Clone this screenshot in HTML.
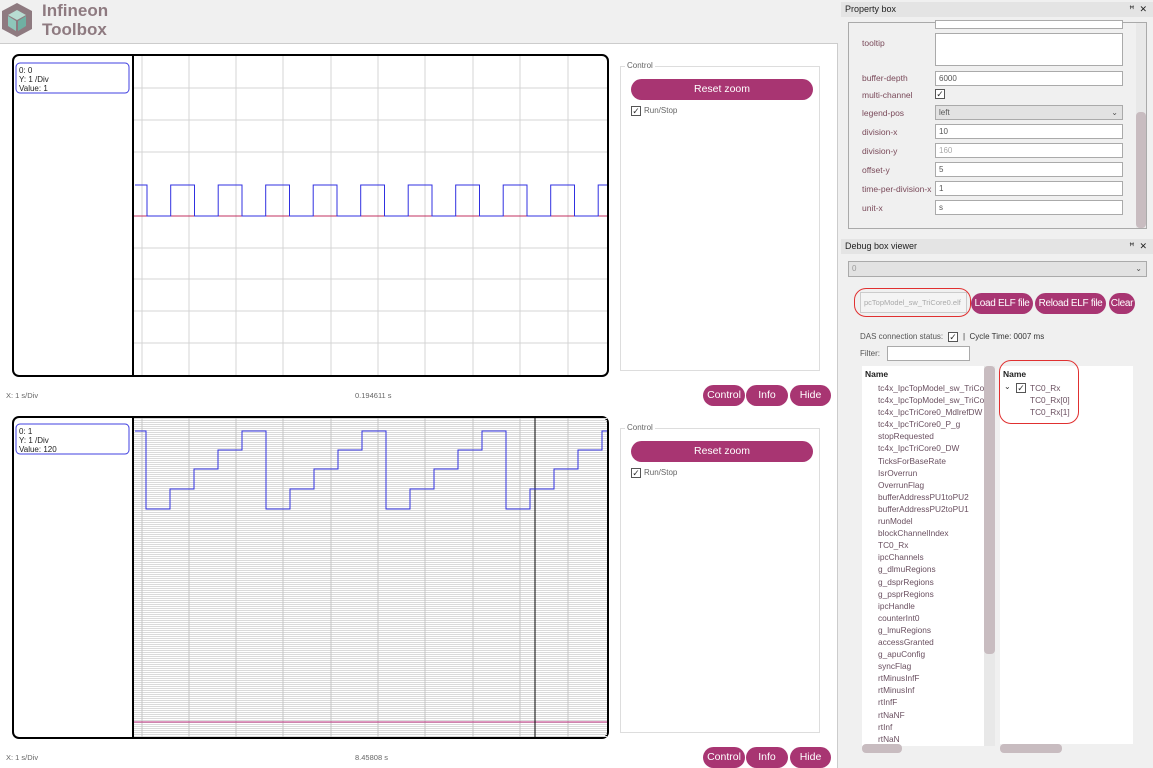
<!DOCTYPE html>
<html><head><meta charset="utf-8"><style>
*{box-sizing:border-box;margin:0;padding:0}
body{width:1153px;height:768px;overflow:hidden;background:#f0f0f0;font-family:"Liberation Sans",sans-serif;font-size:9px;color:#333;position:relative}
.a{position:absolute}
.btn{position:absolute;background:#a83572;color:#fff;border-radius:11px;text-align:center;font-size:10.5px;line-height:21px;white-space:nowrap;overflow:hidden}
.inp{position:absolute;background:#fff;border:1px solid #aaa;font-size:8px;padding-left:3px;line-height:13px;color:#555}
.lbl{position:absolute;font-size:8.5px;color:#7a4a5a}
.cb{position:absolute;width:10px;height:10px;border:1px solid #555;background:#fff;font-size:9px;line-height:8px;text-align:center}
.tree div{height:12.1px;line-height:12px;font-size:8.3px;color:#6a5060;padding-left:16px}
</style></head><body>
<!-- header -->
<svg class="a" style="left:0;top:0" width="40" height="42"><polygon points="17,3 32,11 32,29 17,37 2,29 2,11" fill="#8e7a80"/><polygon points="17,10 26,15 17,20 8,15" fill="#b8dcd2"/><polygon points="8,16 16,21 16,31 8,26" fill="#8ec7ba"/><polygon points="18,21 26,16 26,26 18,31" fill="#6fb0a2"/></svg>
<div class="a" style="left:42px;top:1px;font-size:17px;font-weight:bold;color:#8e7a80;line-height:19px">Infineon<br>Toolbox</div>
<div class="a" style="left:0;top:43px;width:838px;height:725px;background:#fff;border-top:1px solid #ccc;border-right:1px solid #ccc"></div>

<svg class="a" style="left:0;top:44px" width="838" height="724">
<defs><pattern id="hl" width="4" height="2" patternUnits="userSpaceOnUse"><rect width="4" height="1" fill="#dadada"/></pattern></defs>
<g transform="translate(0,-44)">
<rect x="13" y="55" width="595" height="321" rx="6" fill="#fff" stroke="#000" stroke-width="2"/>
<line x1="133" y1="55" x2="133" y2="376" stroke="#000" stroke-width="2"/>
<g stroke="#d4d4d4" stroke-width="1">
<line x1="142" y1="56" x2="142" y2="375"/><line x1="189" y1="56" x2="189" y2="375"/><line x1="236" y1="56" x2="236" y2="375"/><line x1="283" y1="56" x2="283" y2="375"/><line x1="331" y1="56" x2="331" y2="375"/><line x1="378" y1="56" x2="378" y2="375"/><line x1="425" y1="56" x2="425" y2="375"/><line x1="473" y1="56" x2="473" y2="375"/><line x1="520" y1="56" x2="520" y2="375"/><line x1="568" y1="56" x2="568" y2="375"/>
<line x1="134" y1="88" x2="607" y2="88"/><line x1="134" y1="120" x2="607" y2="120"/><line x1="134" y1="152" x2="607" y2="152"/><line x1="134" y1="248" x2="607" y2="248"/><line x1="134" y1="279" x2="607" y2="279"/><line x1="134" y1="311" x2="607" y2="311"/><line x1="134" y1="343" x2="607" y2="343"/>
</g>
<line x1="134" y1="216" x2="607" y2="216" stroke="#c03060" stroke-width="1"/>
<path d="M135 185H147V216H170.7V185H194.5V216H218.2V185H242V216H265.7V185H289.5V216H313.2V185H337V216H360.7V185H384.5V216H408.2V185H432V216H455.7V185H479.5V216H503.2V185H527V216H550.7V185H574.5V216H598.2V185H607" fill="none" stroke="#3030e0" stroke-width="1"/>
<rect x="16" y="63" width="113" height="30" rx="4" fill="#fff" stroke="#4040e0"/>
<text x="19" y="73" font-size="8" fill="#222">0: 0</text><text x="19" y="82" font-size="8" fill="#222">Y: 1 /Div</text><text x="19" y="91" font-size="8" fill="#222">Value: 1</text>

<rect x="13" y="417" width="595" height="321" rx="6" fill="#fff" stroke="#000" stroke-width="2"/>
<rect x="134" y="418" width="473" height="319" fill="url(#hl)"/>
<line x1="133" y1="417" x2="133" y2="738" stroke="#000" stroke-width="2"/>
<g stroke="#c4c4c4" stroke-width="1">
<line x1="142" y1="418" x2="142" y2="737"/><line x1="189" y1="418" x2="189" y2="737"/><line x1="236" y1="418" x2="236" y2="737"/><line x1="283" y1="418" x2="283" y2="737"/><line x1="331" y1="418" x2="331" y2="737"/><line x1="378" y1="418" x2="378" y2="737"/><line x1="425" y1="418" x2="425" y2="737"/><line x1="473" y1="418" x2="473" y2="737"/><line x1="520" y1="418" x2="520" y2="737"/><line x1="568" y1="418" x2="568" y2="737"/>
</g>
<line x1="134" y1="722" x2="607" y2="722" stroke="#c03080" stroke-width="1"/>
<line x1="535" y1="418" x2="535" y2="737" stroke="#000" stroke-width="1"/>
<path d="M135 431H146V509H170V489H194V469H218V450H242V431H266V509H290V489H314V469H338V450H362V431H386V509H410V489H434V469H458V450H482V431H506V509H530V489H554V469H578V450H602V431H607" fill="none" stroke="#3030e0" stroke-width="1"/>
<rect x="16" y="424" width="113" height="30" rx="4" fill="#fff" stroke="#4040e0"/>
<text x="19" y="434" font-size="8" fill="#222">0: 1</text><text x="19" y="443" font-size="8" fill="#222">Y: 1 /Div</text><text x="19" y="452" font-size="8" fill="#222">Value: 120</text>
</g></svg>

<div class="a" style="left:620px;top:66px;width:200px;height:305px;border:1px solid #ddd"></div>
<div class="a" style="left:625px;top:61px;background:#fff;padding:0 2px;font-size:8px;color:#666">Control</div>
<div class="btn" style="left:631px;top:79px;width:182px">Reset zoom</div>
<div class="cb" style="left:631px;top:106px">✓</div><div class="a" style="left:644px;top:106px;font-size:8px;color:#666">Run/Stop</div>
<div class="a" style="left:620px;top:428px;width:200px;height:305px;border:1px solid #ddd"></div>
<div class="a" style="left:625px;top:423px;background:#fff;padding:0 2px;font-size:8px;color:#666">Control</div>
<div class="btn" style="left:631px;top:441px;width:182px">Reset zoom</div>
<div class="cb" style="left:631px;top:468px">✓</div><div class="a" style="left:644px;top:468px;font-size:8px;color:#666">Run/Stop</div>

<div class="a" style="left:6px;top:391px;font-size:7.5px;color:#666">X: 1 s/Div</div>
<div class="a" style="left:355px;top:391px;font-size:7.5px;color:#666">0.194611 s</div>
<div class="btn" style="left:703px;top:385px;width:42px">Control</div>
<div class="btn" style="left:746px;top:385px;width:42px">Info</div>
<div class="btn" style="left:790px;top:385px;width:41px">Hide</div>
<div class="a" style="left:6px;top:753px;font-size:7.5px;color:#666">X: 1 s/Div</div>
<div class="a" style="left:355px;top:753px;font-size:7.5px;color:#666">8.45808 s</div>
<div class="btn" style="left:703px;top:747px;width:42px">Control</div>
<div class="btn" style="left:746px;top:747px;width:42px">Info</div>
<div class="btn" style="left:790px;top:747px;width:41px">Hide</div>

<div class="a" style="left:841px;top:2px;width:312px;height:15px;background:#e4e4e4;font-size:9px;line-height:15px;padding-left:4px;color:#222">Property box<span style="position:absolute;right:6px">ꟸ&nbsp;&nbsp;✕</span></div>
<div class="a" style="left:848px;top:22px;width:299px;height:207px;border:1px solid #aaa;background:#f0f0f0"></div>
<div class="a" style="left:1136px;top:23px;width:10px;height:205px;background:#e8e8e8"></div>
<div class="a" style="left:1136px;top:112px;width:10px;height:116px;background:#c8bcc0;border-radius:4px"></div>
<div class="inp" style="left:935px;top:20px;width:188px;height:9px"></div>
<div class="lbl" style="left:862px;top:38px">tooltip</div><div class="inp" style="left:935px;top:33px;width:188px;height:33px"></div>
<div class="lbl" style="left:862px;top:73px">buffer-depth</div><div class="inp" style="left:935px;top:71px;width:188px;height:15px">6000</div>
<div class="lbl" style="left:862px;top:90px">multi-channel</div><div class="cb" style="left:935px;top:89px">✓</div>
<div class="lbl" style="left:862px;top:108px">legend-pos</div><div class="inp" style="left:935px;top:105px;width:188px;height:15px;background:#e2e2e2">left<span style="position:absolute;right:4px">⌄</span></div>
<div class="lbl" style="left:862px;top:127px">division-x</div><div class="inp" style="left:935px;top:124px;width:188px;height:15px">10</div>
<div class="lbl" style="left:862px;top:146px">division-y</div><div class="inp" style="left:935px;top:143px;width:188px;height:15px;color:#aaa">160</div>
<div class="lbl" style="left:862px;top:165px">offset-y</div><div class="inp" style="left:935px;top:162px;width:188px;height:15px">5</div>
<div class="lbl" style="left:862px;top:184px">time-per-division-x</div><div class="inp" style="left:935px;top:181px;width:188px;height:15px">1</div>
<div class="lbl" style="left:862px;top:203px">unit-x</div><div class="inp" style="left:935px;top:200px;width:188px;height:15px">s</div>

<div class="a" style="left:841px;top:239px;width:312px;height:15px;background:#e4e4e4;font-size:9px;line-height:15px;padding-left:4px;color:#222">Debug box viewer<span style="position:absolute;right:6px">ꟸ&nbsp;&nbsp;✕</span></div>
<div class="inp" style="left:848px;top:261px;width:299px;height:16px;background:#e2e2e2;color:#999;line-height:14px">0<span style="position:absolute;right:4px;color:#555">⌄</span></div>
<div class="inp" style="left:860px;top:292px;width:107px;height:21px;line-height:19px;background:#f4f4f4;color:#aaa;border-color:#ccc;white-space:nowrap;overflow:hidden;font-size:7.5px">pcTopModel_sw_TriCore0.elf</div>
<div class="a" style="left:854px;top:288px;width:117px;height:29px;border:1px solid #e03030;border-radius:12px"></div>
<div class="btn" style="left:971px;top:293px;width:62px;font-size:10px;letter-spacing:-0.3px">Load ELF file</div>
<div class="btn" style="left:1035px;top:293px;width:71px;font-size:10px;letter-spacing:-0.3px">Reload ELF file</div>
<div class="btn" style="left:1109px;top:293px;width:26px;font-size:10px;letter-spacing:-0.3px">Clear</div>
<div class="a" style="left:860px;top:332px;font-size:8px;color:#555">DAS connection status:</div>
<div class="cb" style="left:948px;top:332px">✓</div>
<div class="a" style="left:963px;top:332px;font-size:8px;color:#333">| &nbsp;Cycle Time: 0007 ms</div>
<div class="a" style="left:860px;top:349px;font-size:8px;color:#555">Filter:</div>
<div class="inp" style="left:887px;top:346px;width:83px;height:15px"></div>
<div class="a" style="left:862px;top:366px;width:122px;height:380px;background:#fff"></div>
<div class="a" style="left:984px;top:366px;width:11px;height:380px;background:#e8e8e8"></div>
<div class="a" style="left:984px;top:366px;width:11px;height:288px;background:#c8bcc0;border-radius:4px"></div>
<div class="a" style="left:862px;top:744px;width:40px;height:9px;background:#c8bcc0;border-radius:4px"></div>
<div class="a" style="left:1000px;top:366px;width:133px;height:378px;background:#fff"></div>
<div class="a" style="left:1000px;top:744px;width:62px;height:9px;background:#c8bcc0;border-radius:4px"></div>
<div class="a" style="left:865px;top:369px;font-size:8.5px;color:#222;font-weight:bold">Name</div>
<div class="tree a" style="left:862px;top:382px;width:122px;overflow:hidden;white-space:nowrap">
<div>tc4x_IpcTopModel_sw_TriCore</div><div>tc4x_IpcTopModel_sw_TriCore</div><div>tc4x_IpcTriCore0_MdlrefDW</div><div>tc4x_IpcTriCore0_P_g</div><div>stopRequested</div><div>tc4x_IpcTriCore0_DW</div><div>TicksForBaseRate</div><div>IsrOverrun</div><div>OverrunFlag</div><div>bufferAddressPU1toPU2</div><div>bufferAddressPU2toPU1</div><div>runModel</div><div>blockChannelIndex</div><div>TC0_Rx</div><div>ipcChannels</div><div>g_dlmuRegions</div><div>g_dsprRegions</div><div>g_psprRegions</div><div>ipcHandle</div><div>counterInt0</div><div>g_lmuRegions</div><div>accessGranted</div><div>g_apuConfig</div><div>syncFlag</div><div>rtMinusInfF</div><div>rtMinusInf</div><div>rtInfF</div><div>rtNaNF</div><div>rtInf</div><div>rtNaN</div>
</div>
<div class="a" style="left:1003px;top:369px;font-size:8.5px;color:#222;font-weight:bold">Name</div>
<div class="a" style="left:1004px;top:382px;font-size:8px">⌄</div>
<div class="cb" style="left:1016px;top:383px">✓</div>
<div class="a" style="left:1030px;top:383px;font-size:8.3px;color:#6a5060">TC0_Rx</div>
<div class="a" style="left:1030px;top:395px;font-size:8.3px;color:#6a5060">TC0_Rx[0]</div>
<div class="a" style="left:1030px;top:407px;font-size:8.3px;color:#6a5060">TC0_Rx[1]</div>
<div class="a" style="left:999px;top:360px;width:80px;height:64px;border:1px solid #e03030;border-radius:12px"></div>
</body></html>
